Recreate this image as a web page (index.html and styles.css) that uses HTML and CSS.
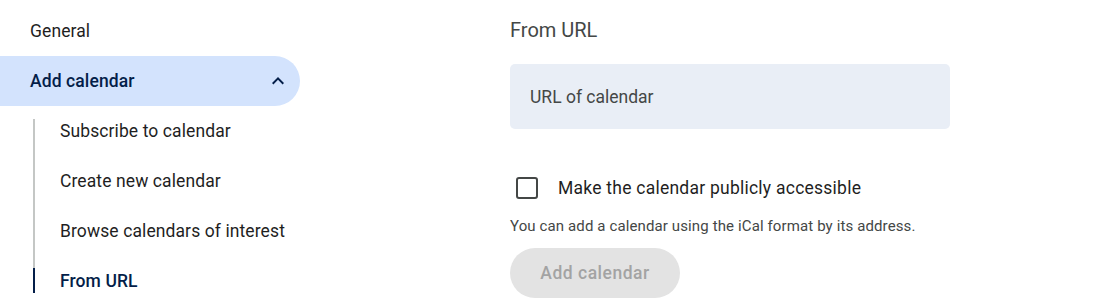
FILE: index.html
```html
<!DOCTYPE html>
<html>
<head>
<meta charset="utf-8">
<link rel="stylesheet" href="styles.css">
</head>
<body>
<div class="page">
  <nav class="nav">
    <div class="nav-item">General</div>
    <div class="nav-item nav-open">
      <span>Add calendar</span>
      <svg class="chev" viewBox="0 0 24 24" width="24" height="24"><path d="M12 8l-6 6 1.41 1.41L12 10.83l4.59 4.58L18 14z"/></svg>
    </div>
    <div class="sub">
      <div class="sub-item">Subscribe to calendar</div>
      <div class="sub-item">Create new calendar</div>
      <div class="sub-item">Browse calendars of interest</div>
      <div class="sub-item sub-active">From URL</div>
    </div>
  </nav>
  <main class="content">
    <h2 class="title">From URL</h2>
    <div class="field">URL of calendar</div>
    <label class="check-row">
      <span class="box"></span>
      <span class="check-label">Make the calendar publicly accessible</span>
    </label>
    <p class="help">You can add a calendar using the iCal format by its address.</p>
    <button class="btn" disabled>Add calendar</button>
  </main>
</div>
</body>
</html>
```

FILE: styles.css
```css
html, body {
  margin: 0;
  padding: 0;
  background: #fff;
}
body {
  font-family: Roboto, "Noto Sans", Arial, sans-serif;
  color: #1f1f1f;
  overflow: hidden;
}
.page {
  display: flex;
  width: 1108px;
  height: 306px;
}
.nav {
  width: 300px;
  flex: none;
  padding-top: 6px;
}
.nav-item {
  height: 50px;
  display: flex;
  align-items: center;
  justify-content: space-between;
  padding: 0 10px 0 30px;
  font-size: 17.5px;
  letter-spacing: 0.1px;
  box-sizing: border-box;
}
.nav-open {
  background: #d3e3fd;
  color: #041e49;
  border-radius: 0 25px 25px 0;
  font-weight: 500;
}
.chev {
  fill: #041e49;
}
.sub {
  position: relative;
  padding-left: 60px;
}
.sub::before {
  content: "";
  position: absolute;
  left: 33px;
  top: 13px;
  bottom: 13px;
  width: 2px;
  background: #c4c7c5;
}
.sub-item {
  position: relative;
  height: 50px;
  display: flex;
  align-items: center;
  font-size: 17.5px;
  letter-spacing: 0.1px;
}
.sub-active {
  color: #041e49;
  font-weight: 500;
}
.sub-active::before {
  content: "";
  position: absolute;
  left: -27px;
  top: 12px;
  height: 25px;
  width: 2px;
  background: #041e49;
}
.content {
  margin-left: 210px;
  display: flex;
  flex-direction: column;
  align-items: flex-start;
}
.title {
  margin: 16px 0 0;
  font-size: 20px;
  line-height: 28px;
  font-weight: 400;
  color: #444746;
}
.field {
  margin-top: 20px;
  width: 440px;
  height: 65px;
  box-sizing: border-box;
  padding-left: 20px;
  display: flex;
  align-items: center;
  background: #e9eef6;
  border-radius: 5px;
  font-size: 17.5px;
  color: #444746;
}
.check-row {
  margin-top: 34px;
  height: 50px;
  display: flex;
  align-items: center;
}
.box {
  width: 22px;
  height: 22px;
  box-sizing: border-box;
  border: 2.5px solid #444746;
  border-radius: 3px;
  margin-left: 6px;
}
.check-label {
  margin-left: 20px;
  font-size: 17.5px;
  letter-spacing: 0.24px;
  color: #1f1f1f;
}
.help {
  margin: 3px 0 0;
  font-size: 15px;
  line-height: 20px;
  letter-spacing: 0.12px;
  color: #444746;
}
.btn {
  margin-top: 12px;
  height: 50px;
  width: 170px;
  border: none;
  border-radius: 25px;
  background: #e3e3e3;
  color: #a3a3a3;
  font-family: inherit;
  font-size: 17.5px;
  font-weight: 500;
  letter-spacing: 0.5px;
  padding: 0;
}
```
